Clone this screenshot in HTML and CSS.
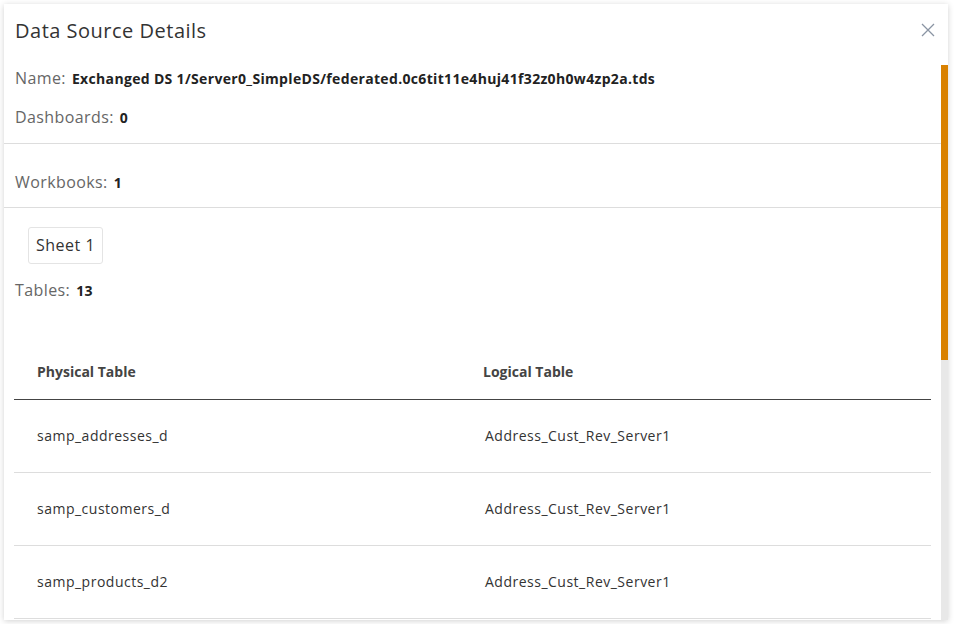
FILE: index.html
```html
<!DOCTYPE html>
<html lang="en">
<head>
  <meta charset="UTF-8" />
  <title>Data Source Details</title>
  <link rel="stylesheet" href="styles.css">
</head>
<body>
  <div class="modal">
    <div class="modal-header">
      <h2>Data Source Details</h2>
      <button class="close" aria-label="Close">
        <svg width="14" height="14" viewBox="0 0 14 14"><path d="M1 1L13 13M13 1L1 13" stroke="#8a94a3" stroke-width="1.3" fill="none"/></svg>
      </button>
    </div>

    <div class="modal-body">
      <div class="content">
        <!-- summary -->
        <div class="section first">
          <div class="field"><span class="label">Name:</span> <b>Exchanged DS 1/Server0_SimpleDS/federated.0c6tit11e4huj41f32z0h0w4zp2a.tds</b></div>
          <div class="field"><span class="label">Dashboards:</span> <b>0</b></div>
        </div>

        <div class="section workbooks">
          <div class="field"><span class="label">Workbooks:</span> <b>1</b></div>
        </div>

        <div class="section tables">
          <div class="sheets">
            <span class="sheet">Sheet 1</span>
          </div>
          <div class="field"><span class="label">Tables:</span> <b>13</b></div>

          <table>
            <thead>
              <tr><th class="col-physical">Physical Table</th><th>Logical Table</th></tr>
            </thead>
            <tbody>
              <tr><td>samp_addresses_d</td><td>Address_Cust_Rev_Server1</td></tr>
              <tr><td>samp_customers_d</td><td>Address_Cust_Rev_Server1</td></tr>
              <tr><td>samp_products_d2</td><td>Address_Cust_Rev_Server1</td></tr>
            </tbody>
          </table>
        </div>
      </div>

      <!-- scrollbar -->
      <div class="scrollbar"><div class="thumb"></div></div>
    </div>
  </div>
</body>
</html>
```

FILE: styles.css
```css
body {
  margin: 0;
  padding: 4px;
  background-color: #fff;
  font-family: 'Open Sans', sans-serif;
  color: #333;
}
.modal {
  width: 944px;
  height: 616px;
  background-color: #fff;
  box-shadow: 0 1px 6px rgba(0, 0, 0, 0.18);
  display: flex;
  flex-direction: column;
  overflow: hidden;
}
.modal-header {
  height: 61px;
  flex: none;
  display: flex;
  align-items: center;
  justify-content: space-between;
  padding: 0 13px 0 11px;
}
.modal-header h2 {
  margin: 0;
  font-size: 20px;
  font-weight: 400;
  color: #333;
  letter-spacing: 0.5px;
  line-height: 26px;
  padding-bottom: 8px;
}
.close {
  border: none;
  background: none;
  padding: 0;
  width: 14px;
  height: 14px;
  cursor: pointer;
  margin-bottom: 9px;
}
.close svg {
  display: block;
}
.modal-body {
  flex: 1;
  display: flex;
  min-height: 0;
}
.content {
  flex: 1;
  overflow: hidden;
}
.scrollbar {
  width: 7px;
  flex: none;
  background-color: #e8e8e8;
}
.thumb {
  height: 295px;
  background-color: #d98100;
}
.section {
  border-bottom: 1px solid #ddd;
  padding: 25px 0 12px 11px;
  display: flex;
  flex-direction: column;
  gap: 13px;
}
.section.first {
  padding-top: 0;
  padding-bottom: 13px;
}
.section.tables {
  border-bottom: none;
  padding: 19px 0 0 0;
  gap: 0;
}
.field {
  display: flex;
  align-items: baseline;
  gap: 6px;
  height: 26px;
  line-height: 26px;
  font-size: 14px;
}
.field .label {
  font-size: 16px;
  color: #666;
  letter-spacing: 0.4px;
}
.field b {
  color: #222;
  font-weight: 700;
  letter-spacing: 0.33px;
}
.sheets {
  padding-left: 24px;
  margin-bottom: 13px;
}
.sheet {
  display: inline-block;
  border: 1px solid #e4e4e4;
  border-radius: 3px;
  padding: 0 7px;
  line-height: 35px;
  font-size: 16px;
  letter-spacing: 0.5px;
}
.tables .field {
  padding-left: 11px;
}
table {
  margin: 42px 10px 0;
  width: calc(100% - 20px);
  border-collapse: collapse;
  font-size: 14px;
}
th {
  text-align: left;
  font-weight: 700;
  color: #444;
  line-height: 18px;
  padding: 18px 23px;
  border-bottom: 1px solid #444;
}
.col-physical {
  width: 400px;
}
td {
  line-height: 18px;
  padding: 27px 23px;
  border-bottom: 1px solid #ddd;
  letter-spacing: 0.5px;
}
td + td {
  padding-left: 25px;
}
```
